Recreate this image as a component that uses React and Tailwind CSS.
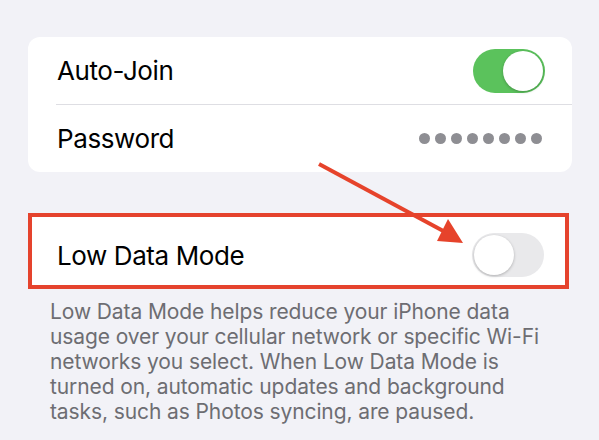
import React from 'react'

// iOS-style switch
function Toggle({ on }) {
  return (
    <div
      className={
        on
          ? 'w-[72px] h-[44px] rounded-full bg-[#5bc25c] flex items-center justify-end p-[2px]'
          : 'w-[72px] h-[44px] rounded-full bg-[#e9e9eb] flex items-center justify-start p-[2px]'
      }
    >
      <div className="w-[40px] h-[40px] rounded-full bg-white shadow-[0_1px_3px_rgba(0,0,0,0.25)]" />
    </div>
  )
}

const NOTE = [
  'Low Data Mode helps reduce your iPhone data',
  'usage over your cellular network or specific Wi-Fi',
  'networks you select. When Low Data Mode is',
  'turned on, automatic updates and background',
  'tasks, such as Photos syncing, are paused.',
]

export default function App() {
  return (
    <div className="relative w-[599px] h-[440px] overflow-hidden bg-[#f2f2f7] font-['Inter','Liberation_Sans',sans-serif] text-black">
      {/* Network settings card */}
      <div className="pt-[37px] pl-[28px] pr-[27px]">
        <div className="rounded-[12px] bg-white">
          <div className="h-[67px] flex items-center justify-between pl-[29px] pr-[27px]">
            <span className="text-[26px] tracking-[-0.4px]">Auto-Join</span>
            <Toggle on />
          </div>
          <div className="ml-[28px] h-px bg-[#dedee3]" />
          <div className="h-[67px] flex items-center justify-between pl-[29px] pr-[30px]">
            <span className="text-[26px] tracking-[-0.4px]">Password</span>
            <div className="flex gap-[5px]">
              {Array.from({ length: 8 }).map((_, i) => (
                <span key={i} className="w-[11px] h-[11px] rounded-full bg-[#8e8e93]" />
              ))}
            </div>
          </div>
        </div>
      </div>

      {/* Low Data Mode row, highlighted */}
      <div className="mt-[41px] ml-[28px] w-[541px] h-[76px] border-[4px] border-[#e5432d] bg-white flex items-center justify-between pt-[8px] pl-[25px] pr-[21px]">
        <span className="text-[26px] tracking-[-0.4px]">Low Data Mode</span>
        <Toggle on={false} />
      </div>

      <div className="pt-[10px] pl-[50px] text-[21px] leading-[25px] text-[#6d6d72] tracking-[-0.1px]">
        {NOTE.map((line) => (
          <div key={line}>{line}</div>
        ))}
      </div>

      {/* Arrow pointing at the switch */}
      <svg className="absolute inset-0 pointer-events-none" width="599" height="440" viewBox="0 0 599 440">
        <line x1="319" y1="164" x2="447" y2="233" stroke="#e6432b" strokeWidth="4" />
        <polygon points="437,241 463,243 448,219" fill="#e6432b" />
      </svg>
    </div>
  )
}
